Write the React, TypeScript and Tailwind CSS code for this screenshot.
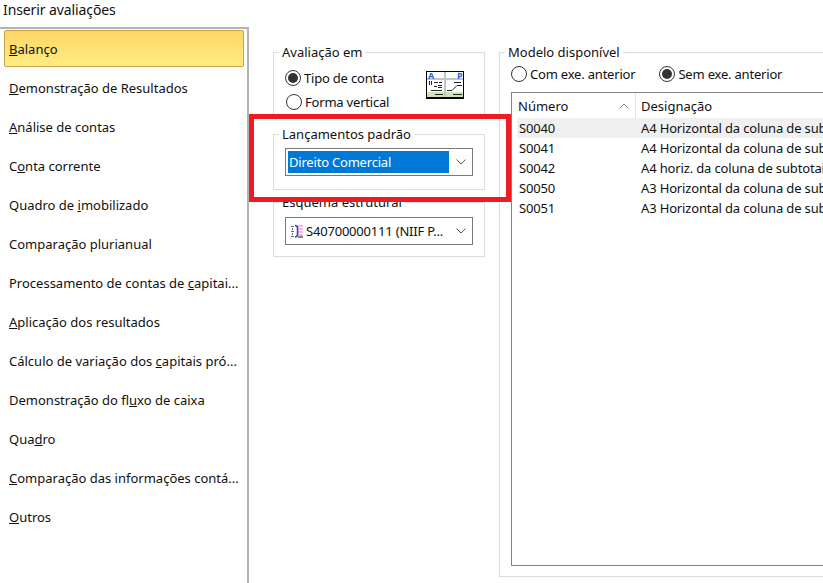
import React from 'react';

const font = { fontFamily: '"Noto Sans", sans-serif' };

// [before, mnemonic, after]
const items: [string, string, string][] = [
  ['', 'B', 'alanço'],
  ['', 'D', 'emonstração de Resultados'],
  ['', 'A', 'nálise de contas'],
  ['C', 'o', 'nta corrente'],
  ['Quadro de ', 'i', 'mobilizado'],
  ['Comparação plurianual', '', ''],
  ['Processamento de contas de ', 'c', 'apitai...'],
  ['', 'A', 'plicação dos resultados'],
  ['Cálculo de variação dos ', 'c', 'apitais pró...'],
  ['Demonstração do fl', 'u', 'xo de caixa'],
  ['Qua', 'd', 'ro'],
  ['', 'C', 'omparação das informações contá...'],
  ['', 'O', 'utros'],
];

const rows = [
  ['S0040', 'A4 Horizontal da coluna de subtotais'],
  ['S0041', 'A4 Horizontal da coluna de subtotais'],
  ['S0042', 'A4 horiz. da coluna de subtotais'],
  ['S0050', 'A3 Horizontal da coluna de subtotais'],
  ['S0051', 'A3 Horizontal da coluna de subtotais'],
];

function Radio({ label, checked }: { label: string; checked?: boolean }) {
  return (
    <div className="flex items-center gap-[3px]">
      <span className="flex h-[16px] w-[16px] items-center justify-center rounded-full border border-[#333]">
        {checked && <span className="h-[10px] w-[10px] rounded-full bg-[#333]" />}
      </span>
      <span className="tracking-[-0.2px]">{label}</span>
    </div>
  );
}

function Chevron() {
  return (
    <svg width="10" height="6" viewBox="0 0 10 6" fill="none" stroke="#555" strokeWidth="1">
      <path d="M.5.5 5 5 9.5.5" />
    </svg>
  );
}

function Group({ title, className, children }: { title: string; className: string; children?: React.ReactNode }) {
  return (
    <div className={`relative border border-[#dcdcdc] ${className}`}>
      <span className="absolute left-[5px] top-[-10px] bg-white px-[3px] leading-[18px]">{title}</span>
      {children}
    </div>
  );
}

function ReportIcon() {
  return (
    <svg width="38" height="28" viewBox="0 0 38 28" shapeRendering="crispEdges">
      <rect width="38" height="28" fill="#000" />
      <rect x="1" y="1" width="36" height="25" fill="#fff" />
      <rect x="1" y="21" width="36" height="5" fill="#cfe3b4" />
      <rect x="1" y="7" width="36" height="2" fill="#c4c4c4" />
      <rect x="18" y="1" width="2" height="25" fill="#c4c4c4" />
      <text x="2" y="8" fontSize="9" fontWeight="700" fill="#2a62d8">A</text>
      <text x="31" y="8" fontSize="9" fontWeight="700" fill="#2a62d8">P</text>
      <path d="M3 10h1v4H3zM5 10h1v4H5zM8 11h4v1H8zM13 11h3v1h-3zM12 14h4v1h-4zM12 16h4v1h-4zM8 15h3v1H8zM5 19h11v1H5zM9 23h8v1H9zM27 23h9v1h-9zM28 11h7v1h-7z" fill="#222" />
      <path d="M21 19.5h5l5-5h5" stroke="#222" fill="none" shapeRendering="auto" />
    </svg>
  );
}

function StructIcon() {
  return (
    <svg width="15" height="15" viewBox="0 0 15 15">
      <rect x="9" y="1" width="5" height="12" fill="#f3b6f0" />
      <path d="M10 3.5h4M10 6.5h4M10 9.5h4" stroke="#fff" strokeWidth="1" />
      <rect x="9" y="12" width="5" height="2" fill="#8a8a6a" />
      <path d="M2 2h3v1H2zM2 7h3v1H2zM2 12h3v1H2zM3 4h1v2H3zM3 9h1v2H3z" fill="#667" />
      <path d="M6 1.5c2 0 2.5 1 2.5 2.5v6c0 1.500-.5 3-2.500 3" fill="none" stroke="#1f4fc0" strokeWidth="1.500" />
    </svg>
  );
}

export default function App() {
  return (
    <div style={font} className="h-[583px] w-[823px] relative overflow-hidden bg-white text-[13px] leading-[18px] text-[#111]">
      <div className="h-[27px] pl-[3px] pt-[1px] text-[14px] tracking-[-0.1px]">Inserir avaliações</div>

      <div className="flex">
        {/* lista da esquerda */}
        <div className="h-[556px] w-[249px] shrink-0 border-r-2 border-t-2 border-[#b4b4b8] pl-[4px] pr-[3px] pt-[1px]">
          {items.map(([a, m, b], i) => (
            <div
              key={i}
              className={`flex items-center whitespace-pre ${
                i === 0
                  ? 'mb-[1px] h-[37px] rounded-[2px] border border-[#c8a348] bg-gradient-to-b from-[#fdd667] to-[#ffec82] pl-[4px]'
                  : 'h-[39px] pl-[5px]'
              }`}
            >
              <span>{a}</span>
              <u>{m}</u>
              <span>{b}</span>
            </div>
          ))}
        </div>

        {/* coluna do meio */}
        <div className="ml-[24px] w-[212px] shrink-0 pt-[25px]">
          <Group title="Avaliação em" className="h-[65px]">
            <div className="flex pl-[11px] pt-[16px]">
              <div className="flex flex-col gap-[6px]">
                <Radio label="Tipo de conta" checked />
                <div className="pl-[1px]">
                  <Radio label="Forma vertical" />
                </div>
              </div>
              <div className="ml-[37px] mt-[2px]">
                <ReportIcon />
              </div>
            </div>
          </Group>

          <Group title="Lançamentos padrão" className="mt-[17px] h-[56px] px-[11px] pt-[13px]">
            <div className="flex h-[28px] items-center border border-[#7a7a7a] pl-[2px] pr-[6px]">
              <span className="flex h-[22px] w-[161px] items-center bg-[#0078d7] pl-[1px] tracking-[-0.2px] text-white">
                Direito Comercial
              </span>
              <span className="ml-auto">
                <Chevron />
              </span>
            </div>
          </Group>

          <Group title="Esquema estrutural" className="mt-[12px] h-[55px] px-[11px] pt-[14px]">
            <div className="flex h-[28px] items-center border border-[#7a7a7a] pl-[3px] pr-[6px]">
              <StructIcon />
              <span className="ml-[2px] tracking-[-0.2px]">S40700000111 (NIIF P...</span>
              <span className="ml-auto">
                <Chevron />
              </span>
            </div>
          </Group>
        </div>

        {/* modelos */}
        <div className="ml-[14px] w-[400px] shrink-0 pt-[25px]">
          <Group title="Modelo disponível" className="h-[525px] px-[11px]">
            <div className="flex gap-[24px] pt-[12px]">
              <Radio label="Com exe. anterior" />
              <Radio label="Sem exe. anterior" checked />
            </div>
            <div className="mt-[9px] h-[474px] border border-[#82828c]">
              <div className="flex h-[25px] items-center pl-[6px]">
                <div className="flex w-[118px] items-center justify-between border-r border-[#e5e5e5] pr-[6px] leading-[25px]">
                  <span className="pt-[1px]">Número</span>
                  <svg width="10" height="6" viewBox="0 0 10 6" fill="none" stroke="#888">
                    <path d="M.5 5.5 5 1l4.5 4.5" />
                  </svg>
                </div>
                <div className="pl-[5px]">Designação</div>
              </div>
              {rows.map(([n, d], i) => (
                <div
                  key={n}
                  className={`ml-[5px] flex h-[20px] items-center whitespace-nowrap tracking-[-0.15px] ${i === 0 ? 'bg-[#f0f0f0]' : ''}`}
                >
                  <span className="w-[124px] pl-[2px]">{n}</span>
                  <span>{d}</span>
                </div>
              ))}
            </div>
          </Group>
        </div>
      </div>

      {/* moldura vermelha da anotação */}
      <div className="absolute left-[249px] top-[114px] h-[88px] w-[262px] border-[5px] border-[#ed1c24]" />
    </div>
  );
}
